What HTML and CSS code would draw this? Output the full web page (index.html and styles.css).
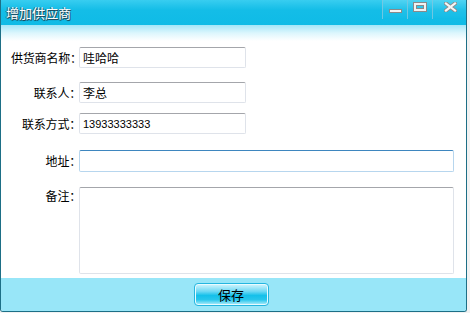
FILE: index.html
```html
<!DOCTYPE html>
<html lang="zh">
<head>
<meta charset="utf-8">
<title>增加供应商</title>
<link rel="stylesheet" href="styles.css">
</head>
<body>
<div class="window">
  <div class="titlebar">
    <span class="title">增加供应商</span>
    <div class="controls">
      <span class="ctl ctl-min"><span class="min-icon"></span></span>
      <span class="ctl ctl-max"><span class="max-icon"></span></span>
      <span class="ctl ctl-close">
        <svg width="13" height="10" viewBox="0 0 13 10"><path d="M2 1.5 L11 8.5 M11 1.5 L2 8.5" stroke="#8c8c8c" stroke-width="4" stroke-linecap="square"/><path d="M2 1.5 L11 8.5 M11 1.5 L2 8.5" stroke="#f6f6f6" stroke-width="2.2" stroke-linecap="square"/></svg>
      </span>
    </div>
  </div>
  <div class="content">
    <form class="form">
      <div class="row r1"><label class="lbl">供货商名称：</label><input class="field short" type="text" value="哇哈哈"></div>
      <div class="row r2"><label class="lbl">联系人：</label><input class="field short" type="text" value="李总"></div>
      <div class="row r3"><label class="lbl">联系方式：</label><input class="field short num" type="text" value="13933333333"></div>
      <div class="row r4"><label class="lbl">地址：</label><input class="field long focus" type="text" value=""></div>
      <div class="row r5"><label class="lbl top">备注：</label><textarea class="field long area"></textarea></div>
    </form>
  </div>
  <div class="footer">
    <button class="btn" type="button">保存</button>
  </div>
</div>
</body>
</html>
```
FILE: styles.css
```css
html, body {
  margin: 0;
  padding: 0;
  background: #f2f2f2;
}
body {
  font-family: "Noto Sans CJK SC", "Liberation Sans", sans-serif;
  font-size: 12px;
  color: #000;
}
.window {
  width: 465px;
  height: 311px;
  border-left: 1px solid #1d6f86;
  border-right: 1px solid #1d6f86;
  border-bottom: 1px solid #1d6f86;
  border-radius: 0 0 3px 3px;
  display: flex;
  flex-direction: column;
  background: #fff;
  overflow: hidden;
}
.titlebar {
  height: 25px;
  flex: none;
  display: flex;
  align-items: flex-start;
  background: linear-gradient(#38cdf0, #14bde7 40%, #0fbbe6);
  margin-left: -1px;
  margin-right: -1px;
  padding-left: 6px;
}
.title {
  font-size: 13px;
  line-height: 25px;
  color: #fff;
  text-shadow: 1px 1px 0 #1b4e60, -1px 0 0 #2a6e84, 0 1px 1px #1b4e60;
}
.controls {
  margin-left: auto;
  display: flex;
  height: 19px;
}
.ctl {
  display: flex;
  align-items: flex-start;
  justify-content: center;
  border-left: 1px solid rgba(120, 200, 225, 0.9);
  box-sizing: border-box;
  background: linear-gradient(rgba(255,255,255,0.12), rgba(255,255,255,0));
}
.ctl-min { width: 25px; }
.ctl-max { width: 25px; }
.ctl-close { width: 35px; padding-top: 2px; }
.min-icon {
  display: block;
  width: 11px;
  height: 2px;
  margin-top: 9px;
  background: #f4f4f4;
  border: 1px solid #8a8a8a;
}
.max-icon {
  display: block;
  width: 8px;
  height: 4px;
  margin-top: 3px;
  border: 2px solid #f2f2f2;
  outline: 1px solid #8a8a8a;
  box-shadow: inset 0 0 0 1px #8a8a8a;
}
.content {
  flex: 1;
  background: linear-gradient(#a3e6f8 0, #dcf6fd 8px, #fff 16px);
}
.form {
  padding: 22px 0 0 10px;
  margin: 0;
  display: flex;
  flex-direction: column;
}
.row {
  display: flex;
  align-items: center;
}
.r2 { margin-top: 14px; }
.r3 { margin-top: 10px; }
.r4 { margin-top: 16px; }
.r5 { margin-top: 15px; align-items: flex-start; }
.lbl {
  width: 70px;
  text-align: right;
  font-size: 12px;
  line-height: 16px;
  white-space: nowrap;
  letter-spacing: -0.2px;
  margin-right: -2px;
}
.lbl.top { margin-top: 1px; }
.field {
  box-sizing: border-box;
  height: 21px;
  margin: 0;
  padding: 0 3px;
  border: 1px solid #dfe3ea;
  border-top-color: #a4a6ab;
  background: #fff;
  font-family: "Noto Sans CJK SC", "Liberation Sans", sans-serif;
  font-size: 12px;
  color: #000;
  outline: none;
  border-radius: 2px;
}
.short { width: 167px; }
.long { width: 375px; }
.num {
  font-family: "Liberation Sans", "DejaVu Sans", sans-serif;
  font-size: 11px;
}
.focus {
  height: 22px;
  border-color: #b7d6ee;
  border-top-color: #3e86bf;
}
.area {
  height: 87px;
  resize: none;
}
.footer {
  height: 33px;
  flex: none;
  background: #98e6f8;
  display: flex;
  justify-content: center;
  align-items: flex-start;
  padding-top: 5px;
  box-sizing: border-box;
}
.btn {
  width: 75px;
  height: 23px;
  margin-right: 5px;
  border: 1px solid #25b6e0;
  border-radius: 4px;
  box-shadow: inset 0 0 0 1px #e8fbff;
  background: linear-gradient(#d4f5fd 0, #6fd9f4 35%, #14c0ea 55%, #28c6ec 75%, #b9effb 100%);
  font-family: "Noto Sans CJK SC", sans-serif;
  font-size: 13px;
  line-height: 19px;
  color: #000;
  padding: 0;
  cursor: pointer;
}
```
